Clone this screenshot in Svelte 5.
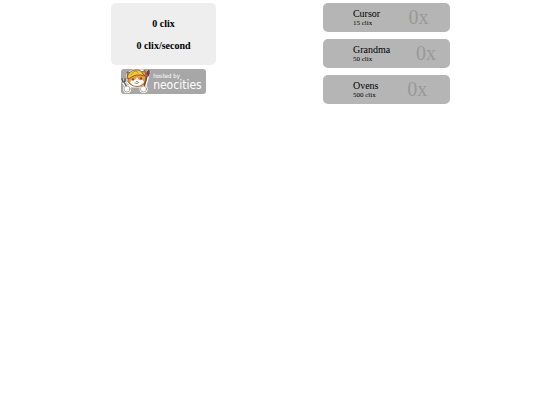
<script lang="ts">
	type Upgrade = { name: string; cost: number; rate: number; owned: number };

	let clix = $state(0);
	let upgrades = $state<Upgrade[]>([
		{ name: 'Cursor', cost: 15, rate: 1, owned: 0 },
		{ name: 'Grandma', cost: 50, rate: 5, owned: 0 },
		{ name: 'Ovens', cost: 500, rate: 20, owned: 0 }
	]);

	let perSecond = $derived(upgrades.reduce((sum, u) => sum + u.rate * u.owned, 0));

	function buy(upgrade: Upgrade) {
		if (clix < upgrade.cost) return;
		clix -= upgrade.cost;
		upgrade.owned += 1;
	}

	$effect(() => {
		const timer = setInterval(() => (clix += perSecond), 1000);
		return () => clearInterval(timer);
	});
</script>

<main class="game">
	<section class="stats">
		<div class="score">
			<p>{clix} clix</p>
			<p>{perSecond} clix/second</p>
		</div>

		<a class="badge" href="https://neocities.org">
			<svg class="mascot" viewBox="0 0 32 25" aria-hidden="true">
				<g fill="none" stroke="#fff" stroke-linecap="round" stroke-linejoin="round">
					<path d="M2 12 L7 20" stroke-width="3.4" />
					<path d="M27.5 3 L23 19" stroke-width="3.6" />
					<path d="M7 5 L12 2 L22 2 L24 8 L24 13 L20 17 L11 17 L7 13 Z" fill="#fff" stroke-width="3" />
					<path d="M6 20 H6.2 M22.5 20 H22.7" stroke-width="8" />
				</g>
				<g stroke="#4a3220" stroke-width="0.6" stroke-linecap="round" stroke-linejoin="round">
					<path d="M7 9 L6 3 L11 4 L20 3 L24 1.5 L25 9 Q26 14 20 17 Q12 19 7 13 Z" fill="#ed983b" />
					<path d="M9 13 Q11 10 14 11 L16 8 L18 11 Q22 10 23 13 Q20 17 16 17 Q11 17 9 13 Z" fill="#fff" stroke="none" />
					<path d="M6 9 Q7 2 14 1 Q20 0 22 5 L24 7 Q15 4 9 9 Z" fill="#f3c63c" />
					<path d="M10 6 Q11 3 14 2 M17 4 Q17 2 14 2" fill="none" stroke="#ad7b21" />
					<path d="M12 10 V11 M20 9 V10" fill="none" stroke-width="1.4" />
					<path d="M15.5 12.5 H16.5 M14 14 Q16 15.5 18 13.5" fill="none" stroke-width="0.6" />
					<path d="M1 10 L2 13 L4 12 L4 10 M3 13 L7 20" fill="none" stroke="#595b5d" stroke-width="1.5" />
					<path d="M26 7 L23 18" fill="none" stroke="#70472f" stroke-width="1.5" />
					<path d="M25.5 6 Q25 2 28 1 Q29.5 3 27.5 7 Z" fill="#a92f40" />
					<circle cx="6" cy="20" r="3" fill="#fff" stroke="#8b735e" />
					<circle cx="22.5" cy="20" r="3" fill="#fff" stroke="#8b735e" />
				</g>
			</svg>
			<span class="host">
				<small>hosted by</small>
				<span>neocities</span>
			</span>
		</a>
	</section>

	<section class="shop">
		{#each upgrades as upgrade (upgrade.name)}
			<button type="button" class="upgrade" onclick={() => buy(upgrade)}>
				<span class="label">
					<span class="name">{upgrade.name}</span>
					<span class="cost">{upgrade.cost} clix</span>
				</span>
				<span class="owned">{upgrade.owned}x</span>
			</button>
		{/each}
	</section>
</main>

<style>
	:global(body) {
		background: #fff;
	}

	.game {
		display: grid;
		grid-template-columns: 1fr 1fr;
		align-items: start;
		padding: 3px 42px 0 52px;
		font-family: 'Liberation Serif', 'Times New Roman', serif;
		color: #000;
	}

	.stats,
	.shop {
		display: flex;
		flex-direction: column;
		align-items: center;
	}

	.stats {
		gap: 4px;
	}

	.score {
		box-sizing: border-box;
		width: 47%;
		padding: 15px 4px 14px;
		border-radius: 5px;
		background: #eee;
		text-align: center;
		font-size: 10px;
		font-weight: bold;
		line-height: 11px;
	}

	.score p {
		margin: 0;
	}

	.score p + p {
		margin-top: 11px;
	}

	.badge {
		display: flex;
		width: 38%;
		border-radius: 3px;
		background: #a7a7a7;
		color: #fff;
		text-decoration: none;
	}

	.mascot {
		flex-shrink: 0;
		width: 32px;
		height: 25px;
	}

	.host {
		display: flex;
		flex-direction: column;
		padding-top: 4px;
		font-family: 'DejaVu Sans Condensed', 'Open Sans', sans-serif;
		font-size: 12px;
		line-height: 13px;
		white-space: nowrap;
	}

	.host small {
		font-size: 6px;
		line-height: 6px;
	}

	.shop {
		gap: 7px;
	}

	.upgrade {
		display: flex;
		align-items: center;
		width: 57%;
		padding: 2px 0 3px 30px;
		border: 0;
		border-radius: 5px;
		background: #b5b5b5;
		color: #000;
		font-family: inherit;
		text-align: left;
		cursor: pointer;
	}

	/* leftover space is split 1:3 around the owned count */
	.upgrade::after {
		content: '';
		flex: 3;
	}

	.label {
		display: flex;
		flex-direction: column;
		padding-top: 1px;
	}

	.name {
		font-size: 10px;
		line-height: 11px;
	}

	.cost {
		font-size: 7px;
		line-height: 8px;
	}

	.owned {
		flex: 1 0 auto;
		margin-left: 21px;
		font-size: 20px;
		line-height: 24px;
		text-align: right;
		color: #999;
	}
</style>
